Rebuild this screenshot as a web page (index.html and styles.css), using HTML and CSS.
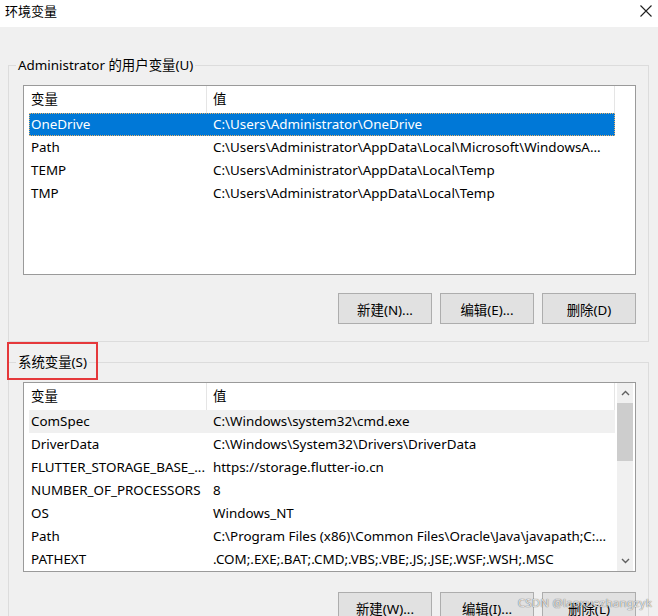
FILE: index.html
```html
<!DOCTYPE html>
<html lang="zh-CN">
<head>
<meta charset="utf-8">
<title>环境变量</title>
<link rel="stylesheet" href="styles.css">
</head>
<body>
<div class="window">
  <div class="titlebar">
    <span class="title">环境变量</span>
    <svg class="close" width="12" height="12" viewBox="0 0 12 12"><path d="M0.5 0.5 L11.5 11.5 M11.5 0.5 L0.5 11.5" stroke="#1f1f1f" stroke-width="1.1" fill="none"/></svg>
  </div>

  <fieldset class="group">
    <legend class="legend">Administrator 的用户变量(U)</legend>
    <div class="list">
      <div class="list-main">
        <div class="hdr"><div class="c1">变量</div><div class="c2">值</div></div>
        <div class="row selected"><div class="c1">OneDrive</div><div class="c2">C:\Users\Administrator\OneDrive</div></div>
        <div class="row"><div class="c1">Path</div><div class="c2">C:\Users\Administrator\AppData\Local\Microsoft\WindowsA...</div></div>
        <div class="row"><div class="c1">TEMP</div><div class="c2">C:\Users\Administrator\AppData\Local\Temp</div></div>
        <div class="row"><div class="c1">TMP</div><div class="c2">C:\Users\Administrator\AppData\Local\Temp</div></div>
      </div>
    </div>
    <div class="buttons">
      <button class="btn">新建(N)...</button>
      <button class="btn">编辑(E)...</button>
      <button class="btn">删除(D)</button>
    </div>
  </fieldset>

  <fieldset class="group group-sys">
    <legend class="legend legend-marked">系统变量(S)</legend>
    <div class="list">
      <div class="list-main">
        <div class="hdr"><div class="c1">变量</div><div class="c2">值</div></div>
        <div class="row hover"><div class="c1">ComSpec</div><div class="c2">C:\Windows\system32\cmd.exe</div></div>
        <div class="row"><div class="c1">DriverData</div><div class="c2">C:\Windows\System32\Drivers\DriverData</div></div>
        <div class="row"><div class="c1">FLUTTER_STORAGE_BASE_...</div><div class="c2">https://storage.flutter-io.cn</div></div>
        <div class="row"><div class="c1">NUMBER_OF_PROCESSORS</div><div class="c2">8</div></div>
        <div class="row"><div class="c1">OS</div><div class="c2">Windows_NT</div></div>
        <div class="row"><div class="c1">Path</div><div class="c2">C:\Program Files (x86)\Common Files\Oracle\Java\javapath;C:...</div></div>
        <div class="row"><div class="c1">PATHEXT</div><div class="c2">.COM;.EXE;.BAT;.CMD;.VBS;.VBE;.JS;.JSE;.WSF;.WSH;.MSC</div></div>
      </div>
      <div class="scrollbar">
        <div class="arrow"><svg width="9" height="6" viewBox="0 0 9 6"><path d="M1 5 L4.5 1.5 L8 5" stroke="#606060" stroke-width="1.4" fill="none"/></svg></div>
        <div class="thumb"></div>
        <div class="track"></div>
        <div class="arrow"><svg width="9" height="6" viewBox="0 0 9 6"><path d="M1 1 L4.5 4.5 L8 1" stroke="#606060" stroke-width="1.4" fill="none"/></svg></div>
      </div>
    </div>
    <div class="buttons buttons-sys">
      <button class="btn">新建(W)...</button>
      <button class="btn">编辑(I)...</button>
      <button class="btn">删除(L)</button>
    </div>
  </fieldset>

  <div class="watermark">CSDN @laoxuezhangzyk</div>
</div>
</body>
</html>
```

FILE: styles.css
```css
html, body {
  margin: 0;
  padding: 0;
  height: 100%;
  overflow: hidden;
}
body {
  background: #f0f0f0;
  font-family: "Noto Sans", "Noto Sans CJK SC", sans-serif;
  font-size: 13.4px;
  color: #000;
}
.window {
  position: relative;
  height: 616px;
  overflow: hidden;
}
.titlebar {
  height: 27px;
  background: #fff;
  display: flex;
  justify-content: space-between;
  align-items: flex-start;
  padding-left: 5px;
  padding-right: 6px;
}
.title {
  line-height: 22px;
  font-size: 13px;
}
.close {
  margin-top: 5px;
}
.group {
  margin: 28px 9px 0 8px;
  border: 1px solid #dcdcdc;
  padding: 10px 12px 17px 14px;
}
.group-sys {
  margin-top: 10px;
}
.legend {
  margin-left: -7px;
  padding: 0 2px;
  line-height: 20px;
  font-size: 13.4px;
}
.legend-marked {
  position: relative;
}
.legend-marked::after {
  content: "";
  position: absolute;
  left: -9px;
  top: -10px;
  width: 91px;
  height: 38px;
  border: 2px solid #e5383b;
  box-sizing: border-box;
}
.list {
  height: 190px;
  box-sizing: border-box;
  border: 1px solid #9a9a9a;
  background: #fff;
  display: flex;
}
.list-main {
  flex: 1;
  min-width: 0;
}
.hdr {
  display: flex;
  height: 27px;
  line-height: 27px;
}
.hdr .c1 {
  width: 183px;
  box-sizing: border-box;
  padding-left: 7px;
  border-right: 1px solid #e5e5e5;
}
.hdr .c2 {
  width: 408px;
  box-sizing: border-box;
  padding-left: 6px;
  border-right: 1px solid #e5e5e5;
}
.row {
  display: flex;
  height: 23px;
  line-height: 23px;
  margin-left: 5px;
  width: 586px;
  white-space: nowrap;
  box-sizing: border-box;
}
.row .c1 {
  width: 178px;
  padding-left: 2px;
  box-sizing: border-box;
  overflow: hidden;
}
.row .c2 {
  flex: 1;
  padding-left: 6px;
  overflow: hidden;
}
.row.selected {
  background: #0078d7;
  color: #fff;
  outline: 1px dotted #e9b36a;
  outline-offset: -1px;
}
.row.hover {
  background: #f0f0f0;
}
.scrollbar {
  width: 16px;
  margin-right: 2px;
  background: #f0f0f0;
  display: flex;
  flex-direction: column;
}
.arrow {
  height: 20px;
  display: flex;
  align-items: center;
  justify-content: center;
}
.thumb {
  height: 58px;
  background: #cdcdcd;
}
.track {
  flex: 1;
}
.buttons {
  display: flex;
  justify-content: flex-end;
  gap: 8px;
  margin-top: 18px;
}
.buttons-sys {
  margin-top: 20px;
}
.btn {
  width: 94px;
  height: 31px;
  border: 1px solid #adadad;
  background: #e1e1e1;
  font-family: "Noto Sans", "Noto Sans CJK SC", sans-serif;
  font-size: 13.4px;
  color: #000;
  padding: 0;
}
.watermark {
  position: absolute;
  right: 6px;
  bottom: 6px;
  font-size: 11.5px;
  color: rgba(255, 255, 255, 0.85);
  text-shadow: 0 0 1px rgba(0, 0, 0, 0.55), 0 0 1px rgba(0, 0, 0, 0.35);
  letter-spacing: 0.2px;
}
```
